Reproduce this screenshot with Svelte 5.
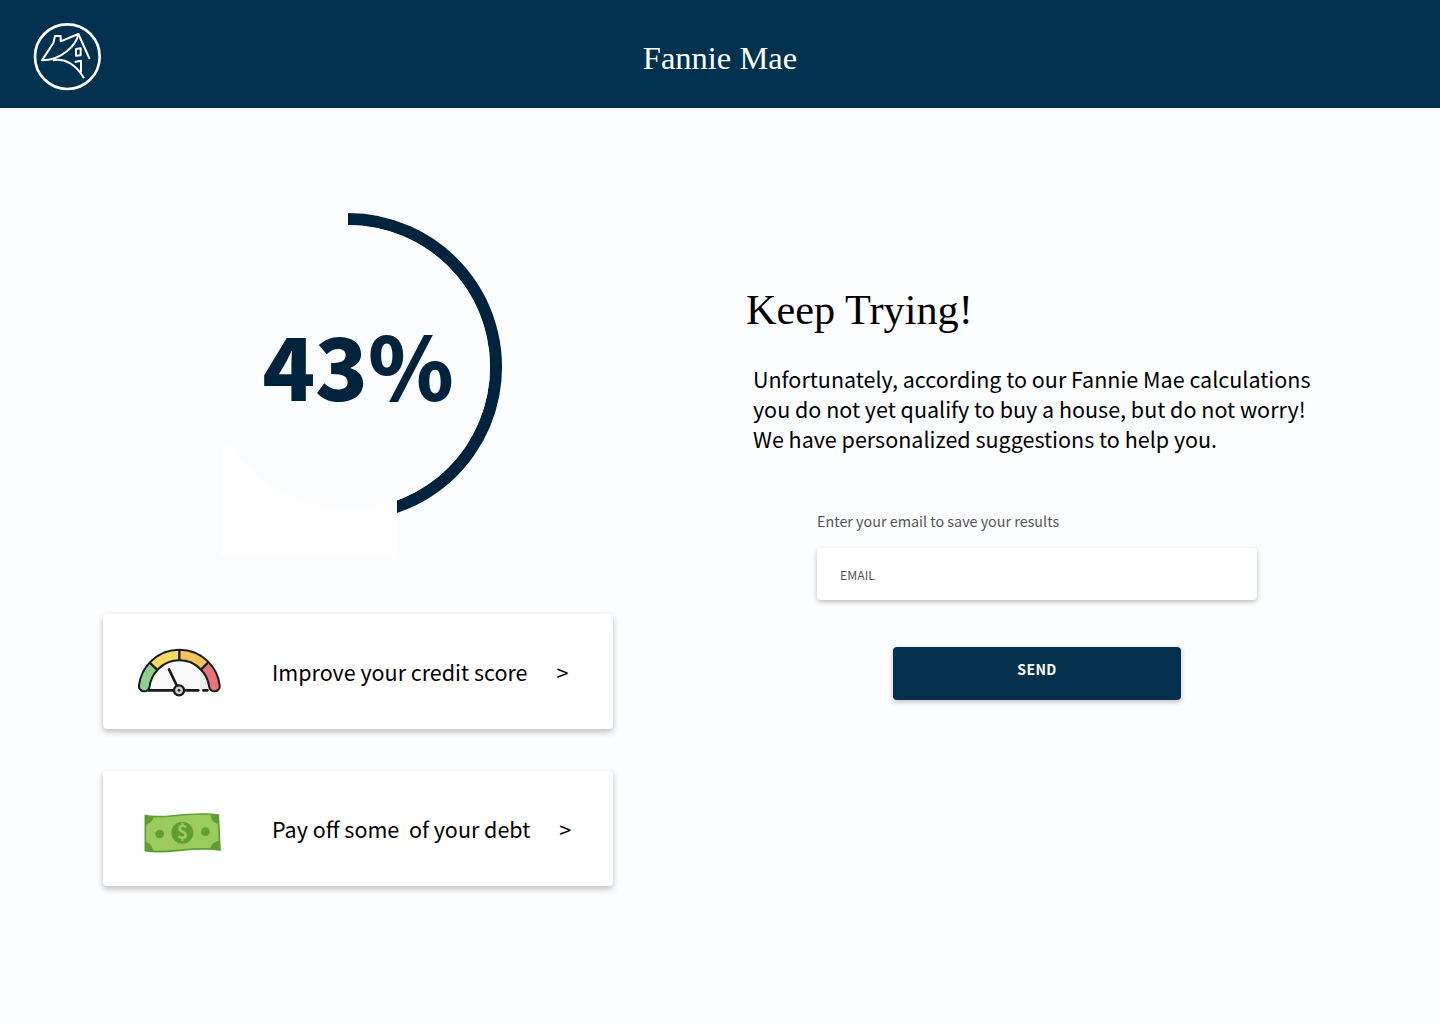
<script>
	// gauge arcs, angles in degrees from +x, centre of the dial at 178,160
	const pt = (a, r) => {
		const t = (a * Math.PI) / 180;
		return `${(178 + r * Math.cos(t)).toFixed(1)} ${(160 - r * Math.sin(t)).toFixed(1)}`;
	};
	const arc = (a1, a2, r = 106) => `M${pt(a1, r)} A${r} ${r} 0 0 1 ${pt(a2, r)}`;
	const tick = (a) => `M${pt(a, 88)} L${pt(a, 124)}`;
</script>

<header class="top">
	<svg class="logo" viewBox="0 0 300 270" aria-label="Fannie Mae logo">
		<circle cx="142" cy="140" r="97" fill="none" stroke="#fff" stroke-width="8" />
		<g fill="none" stroke="#fff" stroke-width="6" stroke-linejoin="round">
			<path d="M66 151 L100 99 L105 78 L122 78 L122 94 L175 72 C170 105 125 150 66 151 Z" />
			<path d="M175 72 L209 147" />
			<path d="M98 151 C135 143 170 165 192 205" />
			<path d="M168 117 L182 115 L182 136 L168 137 Z" />
			<path d="M164 156 L183 152 L183 187" />
		</g>
	</svg>
	<h1>Fannie Mae</h1>
</header>

<main class="page">
	<section class="left">
		<div class="score">
			<svg viewBox="0 0 510 360" class="ring">
				<path d="M245 19 A148 148 0 1 1 190 304.4" fill="none" stroke="#00233d" stroke-width="12" />
				<rect x="118" y="220" width="176" height="137" fill="#fff" />
				<circle cx="245" cy="167" r="142" fill="#fcfdff" />
			</svg>
			<div class="pct">43%</div>
		</div>

		<a class="card" href="#credit">
			<svg class="gauge" viewBox="0 0 360 210">
				<path d="M85 160 A93 93 0 0 1 271 160 Z" fill="#fafafa" />
				<path d="M240 92 A93 93 0 0 1 271 160 L240 160 Z" fill="#eeeeee" />
				<g fill="none">
					<path d={arc(173, 7)} stroke="#1a1a1a" stroke-width="38" stroke-linecap="round" />
					<path d={arc(173, 137)} stroke="#8fd08f" stroke-width="26" stroke-linecap="round" />
					<path d={arc(44, 7)} stroke="#e8747c" stroke-width="26" stroke-linecap="round" />
					<path d={arc(137, 90)} stroke="#fcd965" stroke-width="26" />
					<path d={arc(90, 44)} stroke="#f4c261" stroke-width="26" />
					<path d="{tick(137)} {tick(90)} {tick(44)}" stroke="#1a1a1a" stroke-width="7" />
					<path d="M85 160 H160 M194 160 H235 M250 160 H262" stroke="#1a1a1a" stroke-width="8" stroke-linecap="round" />
					<path d="M147 97 L171 147" stroke="#1a1a1a" stroke-width="8" stroke-linecap="round" />
				</g>
				<circle cx="177" cy="160" r="15" fill="#d0d0d4" stroke="#1a1a1a" stroke-width="7" />
				<circle cx="177" cy="160" r="4" fill="#1a1a1a" />
			</svg>
			<span class="label">Improve your credit score</span>
			<span class="arrow">&gt;</span>
		</a>

		<a class="card second" href="#debt">
			<svg class="bill" viewBox="0 0 300 195">
				<path d="M46 47 C100 60 180 32 265 45 L270 150 C190 136 110 165 46 152 Z" fill="#9ccb5d" stroke="#5f9e33" stroke-width="5" />
				<path d="M46 47 L70 50 C70 62 58 72 46 74 Z M265 45 L267 72 C252 70 242 60 242 44 Z M46 152 L46 125 C58 127 68 138 70 155 Z M270 150 L268 122 C253 124 243 134 241 147 Z" fill="#5f9e33" />
				<circle cx="157" cy="98" r="33" fill="#5f9e33" />
				<circle cx="89" cy="102" r="13" fill="#5f9e33" />
				<circle cx="226" cy="95" r="13" fill="#5f9e33" />
				<text x="157" y="118" text-anchor="middle" class="dollar">$</text>
			</svg>
			<span class="label">Pay off some&nbsp; of your debt</span>
			<span class="arrow">&gt;</span>
		</a>
	</section>

	<section class="right">
		<h2>Keep Trying!</h2>
		<p class="msg">
			Unfortunately, according to our Fannie Mae calculations<br />
			you do not yet qualify to buy a house, but do not worry!<br />
			We have personalized suggestions to help you.
		</p>
		<form class="save" onsubmit={(e) => e.preventDefault()}>
			<label for="email">Enter your email to save your results</label>
			<input id="email" type="email" placeholder="EMAIL" />
			<button type="submit">SEND</button>
		</form>
	</section>
</main>

<style>
	:global(body) {
		background: #fcfdff;
		font-family: "Noto Sans CJK SC", "Noto Sans", sans-serif;
		color: #000;
	}
	.top {
		height: 108px;
		background: #00314f;
		position: relative;
		display: flex;
		align-items: center;
		justify-content: center;
	}
	.logo {
		position: absolute;
		left: 20px;
		top: 10px;
		width: 100px;
		height: 90px;
	}
	h1 {
		margin: 8px 0 0;
		font: 400 32.5px "Liberation Serif", serif;
		color: #fff;
	}
	.page {
		display: flex;
		padding: 92px 0 0 103px;
		height: 824px;
		box-sizing: border-box;
	}
	.left {
		width: 510px;
		display: flex;
		flex-direction: column;
	}
	.score {
		position: relative;
		height: 360px;
		margin-bottom: 54px;
	}
	.ring {
		display: block;
		width: 510px;
		height: 360px;
	}
	.pct {
		position: absolute;
		left: 0;
		right: 0;
		top: 93px;
		text-align: center;
		font-size: 87px;
		line-height: 140px;
		font-weight: 900;
		color: #00233d;
	}
	.card {
		height: 115px;
		background: #fff;
		border-radius: 4px;
		box-shadow: 0 3px 6px rgba(0, 0, 0, 0.25);
		display: flex;
		align-items: center;
		color: #000;
		text-decoration: none;
	}
	.card.second {
		margin-top: 42px;
	}
	.gauge {
		width: 120px;
		height: 70px;
		margin: 0 32px 0 17px;
	}
	.bill {
		width: 100px;
		height: 65px;
		margin: 8px 42px 0 27px;
	}
	.label {
		font-size: 21.5px;
		line-height: 30px;
	}
	.arrow {
		font-size: 21.5px;
		line-height: 30px;
		margin-left: 29px;
	}
	.dollar {
		font: 700 58px "Noto Sans CJK SC", sans-serif;
		fill: #9ccb5d;
	}
	.right {
		margin-left: 133px;
		width: 600px;
	}
	h2 {
		margin: 84px 0 0;
		font: 400 42.3px/52px "Liberation Serif", serif;
	}
	.msg {
		margin: 28px 0 0 7px;
		font-size: 21.5px;
		line-height: 30px;
	}
	.save {
		margin: 57px 0 0 71px;
		width: 440px;
		display: flex;
		flex-direction: column;
	}
	label {
		font-size: 14.35px;
		line-height: 20px;
		color: #555;
		margin-bottom: 17px;
	}
	input {
		height: 52px;
		box-sizing: border-box;
		border: none;
		border-radius: 4px;
		background: #fff;
		padding: 2px 23px 0;
		font: 12.3px "Noto Sans CJK SC", sans-serif;
		box-shadow: 0 2px 5px rgba(0, 0, 0, 0.25);
	}
	input::placeholder {
		color: #555;
		opacity: 1;
	}
	button {
		align-self: center;
		margin-top: 47px;
		width: 288px;
		height: 53px;
		border: none;
		border-radius: 4px;
		background: #05304d;
		color: #fff;
		font: 700 14px "Noto Sans CJK SC", sans-serif;
		letter-spacing: 0.4px;
		padding-bottom: 10px;
		box-shadow: 0 2px 5px rgba(0, 0, 0, 0.25);
	}
</style>
